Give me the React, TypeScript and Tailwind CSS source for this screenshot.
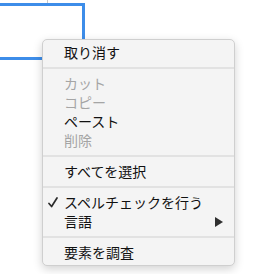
import React from "react";

interface MenuItem {
  label: string;
  disabled?: boolean;
  checked?: boolean;
  submenu?: boolean;
}

const groups: MenuItem[][] = [
  [{ label: "取り消す" }],
  [
    { label: "カット", disabled: true },
    { label: "コピー", disabled: true },
    { label: "ペースト" },
    { label: "削除", disabled: true },
  ],
  [{ label: "すべてを選択" }],
  [{ label: "スペルチェックを行う", checked: true }, { label: "言語", submenu: true }],
  [{ label: "要素を調査" }],
];

const CheckMark: React.FC = () => (
  <svg width="10" height="11" viewBox="0 0 10 11" className="absolute left-[5px] top-[4px]">
    <path d="M1 6.5 L3.6 9.5 L9 1" fill="none" stroke="#2b2b2b" strokeWidth="1.7" strokeLinecap="round" strokeLinejoin="round" />
  </svg>
);

const SubArrow: React.FC = () => (
  <svg width="8" height="10" viewBox="0 0 8 10" className="absolute right-[11px] top-[5px]">
    <path d="M0 0 L8 5 L0 10 Z" fill="#2f2f2f" />
  </svg>
);

const ContextMenu: React.FC = () => {
  return (
    <div className="absolute left-[42px] top-[39px] w-[193px] rounded-[5px] border border-[#cfcfcf] bg-[#f4f4f4] py-[3px] shadow-[0_3px_10px_rgba(0,0,0,0.18)]">
      {groups.map((group, gi) => (
        <div key={gi}>
          {gi > 0 && <div className="my-[5px] h-[2px] bg-[#e2e2e2]" />}
          {group.map((item) => (
            <div
              key={item.label}
              className={`relative h-[19px] pl-[21px] text-[14px] leading-[19px] ${
                item.disabled ? "text-[#a5a5a5]" : "text-[#111111]"
              }`}
            >
              {item.checked && <CheckMark />}
              {item.label}
              {item.submenu && <SubArrow />}
            </div>
          ))}
        </div>
      ))}
    </div>
  );
};

export default function App() {
  return (
    <div
      className="relative h-[274px] w-[260px] overflow-hidden bg-white"
      style={{ fontFamily: '"Noto Sans CJK JP", "Noto Sans", sans-serif' }}
    >
      <div className="ml-[47px] h-[3px] w-px bg-[#c8c8c8]" />
      <div className="-ml-[10px] h-[57px] w-[95px] border-[3px] border-[#3d8de9]" />
      <ContextMenu />
    </div>
  );
}
